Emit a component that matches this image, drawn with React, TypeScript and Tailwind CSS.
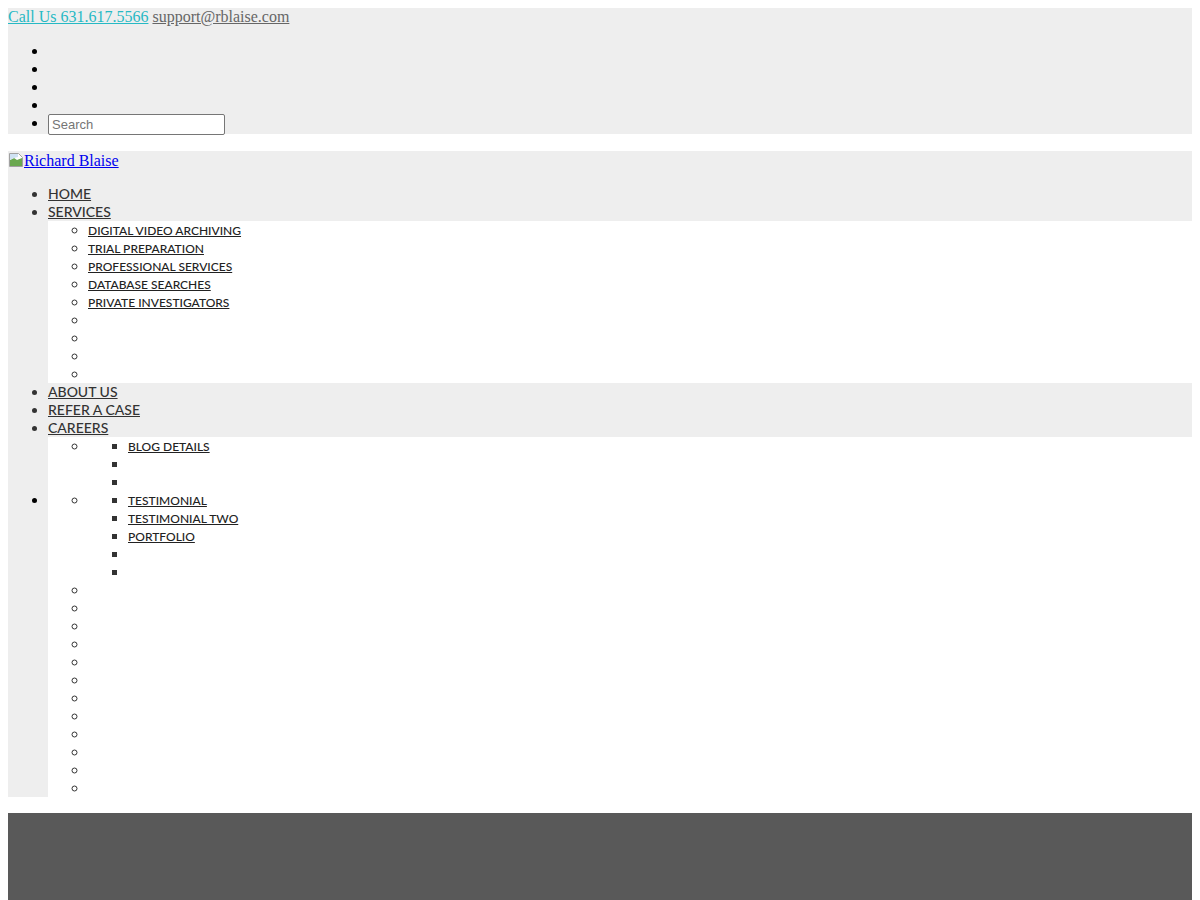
const serif = "font-['Liberation_Serif',serif]";
const nav = "font-['Lato',sans-serif]";

const BrokenImage = function () {
  return (
    <svg width="16" height="16" viewBox="0 0 16 16" className="inline-block align-[-2px]">
      <path d="M1.5 1.5h9l4 4v9h-13z" fill="#fff" stroke="#a0a0a0" />
      <path d="M2 8l4-2 3 2 5-2v8H2z" fill="#6aa84f" />
      <path d="M2 2h8v3l-4 1-4 2z" fill="#cfe2f3" />
    </svg>
  );
};

const TopBar = function () {
  return (
    <section className={`bg-[#eeeeee] ${serif} text-base leading-[18px]`}>
      <div>
        <a href="#" className="text-[#26b9c4] underline">
          Call Us 631.617.5566
        </a>{" "}
        <a href="#" className="text-[#666666] underline">
          support@rblaise.com
        </a>
      </div>
      <ul className="list-disc pl-10 mt-4">
        <li className="h-[18px]"></li>
        <li className="h-[18px]"></li>
        <li className="h-[18px]"></li>
        <li className="h-[18px]"></li>
        <li className="h-[20px]">
          <input
            type="text"
            placeholder="Search"
            className="w-[177px] h-[21px] border border-[#767676] rounded-[2px] bg-white px-[3px] text-[13px] font-['Liberation_Sans',sans-serif] placeholder:text-[#757575] align-top"
          />
        </li>
      </ul>
    </section>
  );
};

const SubLink = function ({ label }: { label: string }) {
  return (
    <a href="#" className="text-[#222222] underline text-xs leading-[18px]">
      {label}
    </a>
  );
};

const Header = function () {
  const services = [
    "DIGITAL VIDEO ARCHIVING",
    "TRIAL PREPARATION",
    "PROFESSIONAL SERVICES",
    "DATABASE SEARCHES",
    "PRIVATE INVESTIGATORS",
    "",
    "",
    "",
    "",
  ];
  const blog = ["BLOG DETAILS", "", ""];
  const pages = ["TESTIMONIAL", "TESTIMONIAL TWO", "PORTFOLIO", "", ""];
  const empties = Array.from({ length: 12 });

  return (
    <header className="bg-[#eeeeee] mt-[17px]">
      <div className={`${serif} text-base leading-[18px] h-[18px] pt-px`}>
        <a href="#" className="text-[#0000ee] underline">
          <BrokenImage />
          Richard Blaise
        </a>
      </div>
      <ul className={`list-disc pl-10 mt-4 ${nav} text-sm leading-[18px] font-medium text-[#333333]`}>
        <li className="h-[18px]">
          <a href="#" className="underline">HOME</a>
        </li>
        <li>
          <div className="h-[18px]">
            <a href="#" className="underline">SERVICES</a>
          </div>
          <ul className="list-[circle] pl-10 bg-white">
            {services.map((s, i) => (
              <li key={i} className="h-[18px]">
                {s && <SubLink label={s} />}
              </li>
            ))}
          </ul>
        </li>
        <li className="h-[18px]">
          <a href="#" className="underline">ABOUT US</a>
        </li>
        <li className="h-[18px]">
          <a href="#" className="underline">REFER A CASE</a>
        </li>
        <li className="h-[18px]">
          <a href="#" className="underline">CAREERS</a>
        </li>
        <li className="list-none -ml-10 flex">
          <div className="w-10 pt-[54px] flex justify-end pr-[11px]">
            <span className="w-[5px] h-[5px] mt-[7px] rounded-full bg-black"></span>
          </div>
          <ul className="flex-1 list-[circle] pl-10 bg-white">
            <li>
              <ul className="list-[square] pl-10">
                {blog.map((s, i) => (
                  <li key={i} className="h-[18px]">
                    {s && <SubLink label={s} />}
                  </li>
                ))}
              </ul>
            </li>
            <li>
              <ul className="list-[square] pl-10">
                {pages.map((s, i) => (
                  <li key={i} className="h-[18px]">
                    {s && <SubLink label={s} />}
                  </li>
                ))}
              </ul>
            </li>
            {empties.map((_, i) => (
              <li key={i} className="h-[18px]"></li>
            ))}
          </ul>
        </li>
      </ul>
    </header>
  );
};

export default function App() {
  return (
    <div className="bg-white px-2 pt-2 text-black">
      <TopBar />
      <Header />
      <section className="bg-[#595959] h-[300px] mt-4"></section>
    </div>
  );
}
